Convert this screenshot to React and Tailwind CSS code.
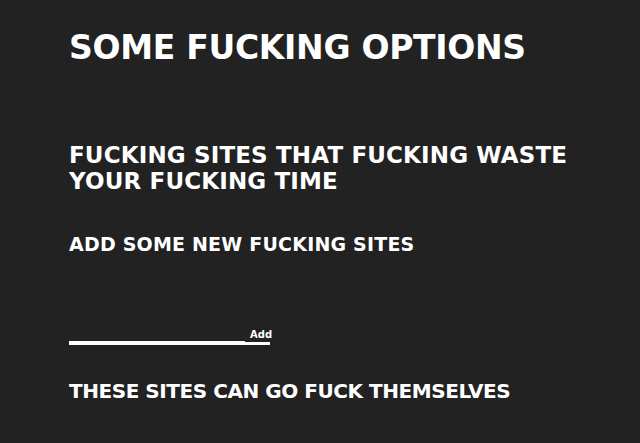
import React, { useState } from 'react';

const font = { fontFamily: '"DejaVu Sans", "Liberation Sans", sans-serif' };

function App() {
  const [site, setSite] = useState('');

  return (
    <div className="min-h-[443px] w-full bg-[#222222] text-white font-bold uppercase" style={font}>
      <div className="pl-[69px] pt-[29px]">
        {/* Title */}
        <h1 className="text-[33px] leading-[38px] tracking-[-0.3px]">Some fucking options</h1>

        {/* Sites section */}
        <h2 className="mt-[75px] w-[540px] text-[23px] leading-[26px] tracking-[0.15px]">
          Fucking sites that fucking waste your fucking time
        </h2>
        <h3 className="mt-[38px] text-[19px] leading-[24px] tracking-[0.2px]">Add some new fucking sites</h3>

        {/* Add form */}
        <form className="mt-[69px] flex items-end" onSubmit={(e) => e.preventDefault()}>
          <input
            type="text"
            value={site}
            onChange={(e) => setSite(e.target.value)}
            className="w-[176px] h-[20px] bg-transparent border-b-[4px] border-white text-white text-xs focus:outline-none"
          />
          <button
            type="submit"
            className="w-[25px] h-[18px] pl-[5px] text-left text-[10px] leading-[12px] normal-case border-b-[3px] border-white"
          >
            Add
          </button>
        </form>

        <h3 className="mt-[34px] text-[20px] leading-[24px] tracking-[-0.45px]">These sites can go fuck themselves</h3>
      </div>
    </div>
  );
}

export default App;
